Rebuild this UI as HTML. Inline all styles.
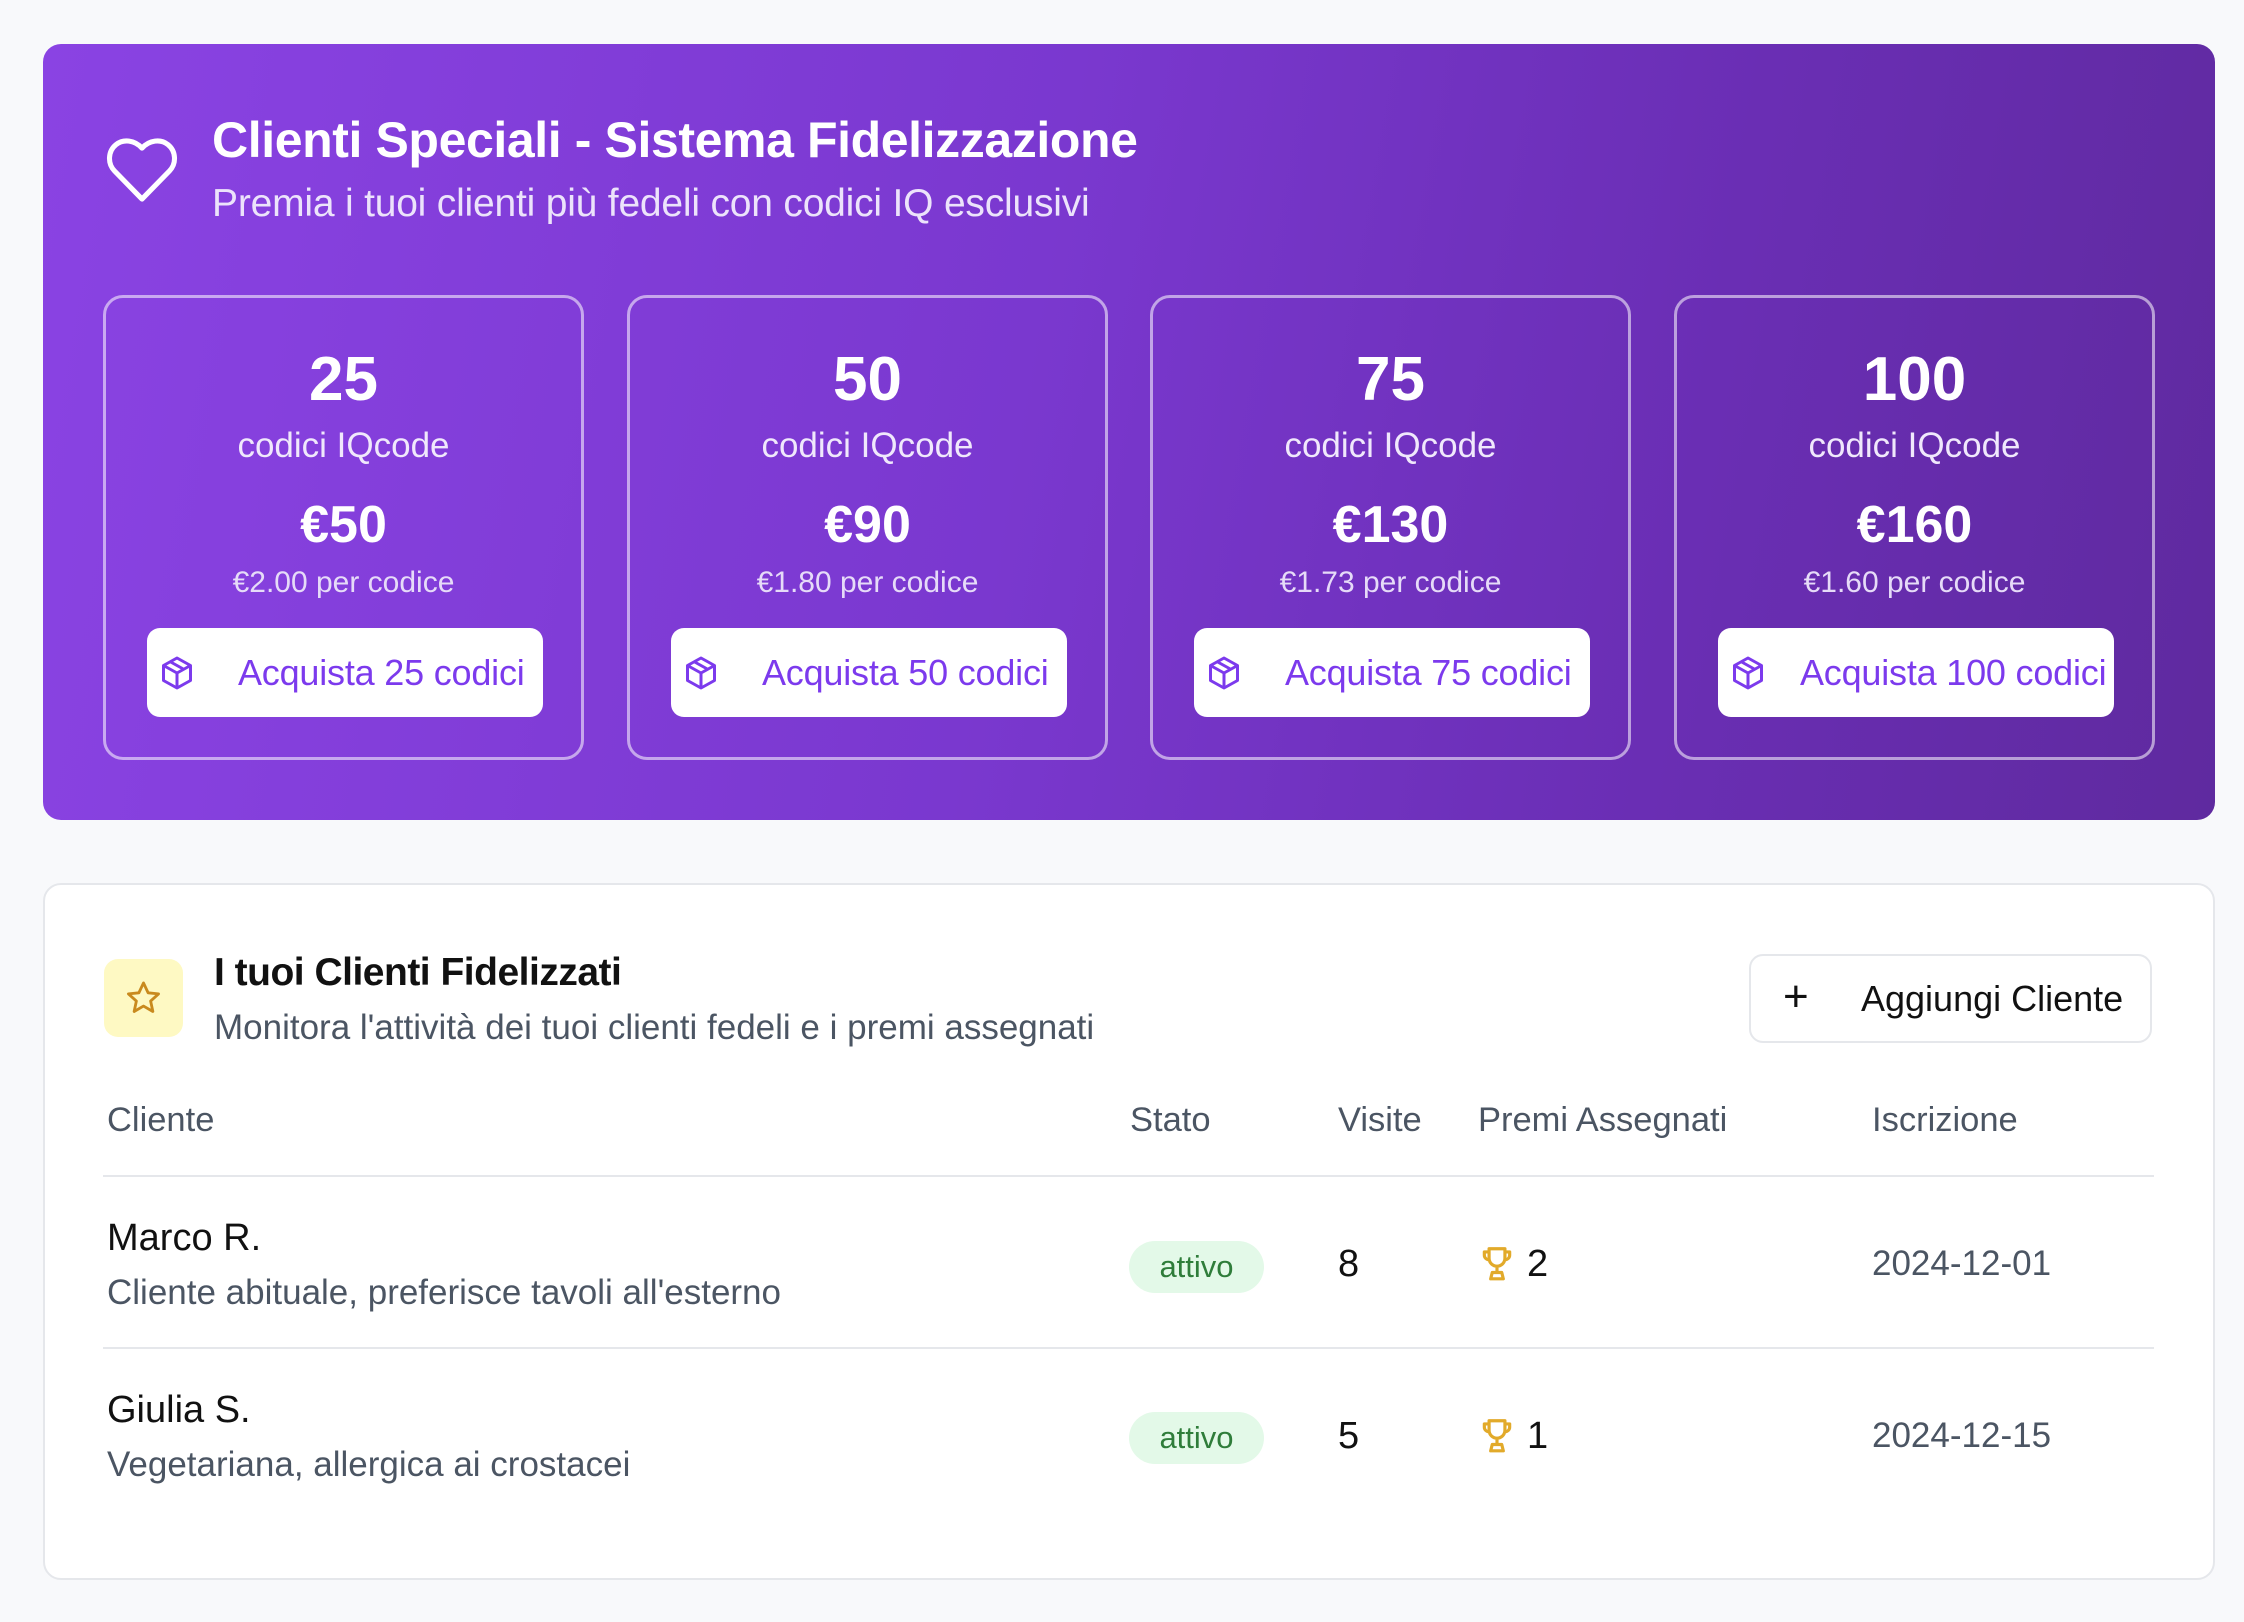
<!DOCTYPE html>
<html><head><meta charset="utf-8"><style>
*{box-sizing:border-box;margin:0;padding:0}
body{width:2244px;height:1622px;background:#f8f9fb;font-family:"Liberation Sans",sans-serif;position:relative;overflow:hidden}
.hero{position:absolute;left:43px;top:44px;width:2172px;height:776px;border-radius:18px;background:linear-gradient(100deg,#8a43e3 0%,#7a38cf 45%,#6a2eb4 75%,#5f2a9f 100%)}
.abs{position:absolute}
.pk{position:absolute;top:251px;width:481px;height:465px;border:3px solid rgba(255,255,255,0.55);border-radius:20px;text-align:center;color:#fff}
.pk .n{position:absolute;top:46px;width:100%;font-size:62px;font-weight:bold}
.pk .c{position:absolute;top:128px;width:100%;font-size:35px;color:#f0e8fc}
.pk .p{position:absolute;top:197px;width:100%;font-size:52px;font-weight:bold}
.pk .pc{position:absolute;top:268px;width:100%;font-size:30px;color:#e6dbf8}
.btn{position:absolute;left:41px;top:330px;width:396px;height:89px;background:#fff;border-radius:13px;color:#7c3aed;font-size:36px;text-align:left}
.btn svg{position:absolute;left:12px;top:26px}
.btn span{position:absolute;left:91px;top:24px;white-space:nowrap;letter-spacing:-0.2px}
.card{position:absolute;left:43px;top:883px;width:2172px;height:697px;background:#fff;border:2px solid #e5e7eb;border-radius:18px}
.t{position:absolute;white-space:nowrap}
.hd{font-size:34.5px;color:#4b5563;top:1101px}
.nm{font-size:38px;color:#111}
.ds{font-size:35px;color:#4b5563}
.badge{position:absolute;width:135px;height:52px;border-radius:26px;background:#e3f9e8;color:#2f7d3a;font-size:31px;text-align:center;line-height:52px}
.line{position:absolute;left:103px;width:2051px;height:2px;background:#e5e7eb}
</style></head><body>
<div class="hero"></div>
<svg class="abs" style="left:104px;top:134px" width="76" height="70" viewBox="0 0 24 22" fill="none" stroke="#fff" stroke-width="1.6" stroke-linejoin="round"><path d="M12 20.5 3.3 11.6C1 9.2 1.3 5.3 3.8 3.3 6.2 1.4 9.7 1.9 12 4.4 14.3 1.9 17.8 1.4 20.2 3.3 22.7 5.3 23 9.2 20.7 11.6Z"/></svg>
<div class="t" style="left:212px;top:111px;font-size:50px;font-weight:bold;color:#fff;letter-spacing:-0.4px">Clienti Speciali - Sistema Fidelizzazione</div>
<div class="t" style="left:212px;top:182px;font-size:39px;color:#ece3fb;letter-spacing:-0.2px">Premia i tuoi clienti più fedeli con codici IQ esclusivi</div>

<div class="pk" style="left:103px;top:295px"><div class="n">25</div><div class="c">codici IQcode</div><div class="p">€50</div><div class="pc">€2.00 per codice</div><div class="btn"><svg width="36" height="38" viewBox="0 0 24 24" fill="none" stroke="#7c3aed" stroke-width="2" stroke-linejoin="round"><path d="M12 2 21 7v10l-9 5-9-5V7z"/><path d="M3 7l9 5 9-5M12 12v10M7.5 4.5l9 5"/></svg><span>Acquista 25 codici</span></div></div>
<div class="pk" style="left:627px;top:295px"><div class="n">50</div><div class="c">codici IQcode</div><div class="p">€90</div><div class="pc">€1.80 per codice</div><div class="btn"><svg width="36" height="38" viewBox="0 0 24 24" fill="none" stroke="#7c3aed" stroke-width="2" stroke-linejoin="round"><path d="M12 2 21 7v10l-9 5-9-5V7z"/><path d="M3 7l9 5 9-5M12 12v10M7.5 4.5l9 5"/></svg><span>Acquista 50 codici</span></div></div>
<div class="pk" style="left:1150px;top:295px"><div class="n">75</div><div class="c">codici IQcode</div><div class="p">€130</div><div class="pc">€1.73 per codice</div><div class="btn"><svg width="36" height="38" viewBox="0 0 24 24" fill="none" stroke="#7c3aed" stroke-width="2" stroke-linejoin="round"><path d="M12 2 21 7v10l-9 5-9-5V7z"/><path d="M3 7l9 5 9-5M12 12v10M7.5 4.5l9 5"/></svg><span>Acquista 75 codici</span></div></div>
<div class="pk" style="left:1674px;top:295px"><div class="n">100</div><div class="c">codici IQcode</div><div class="p">€160</div><div class="pc">€1.60 per codice</div><div class="btn" style="overflow:hidden"><svg width="36" height="38" viewBox="0 0 24 24" fill="none" stroke="#7c3aed" stroke-width="2" stroke-linejoin="round"><path d="M12 2 21 7v10l-9 5-9-5V7z"/><path d="M3 7l9 5 9-5M12 12v10M7.5 4.5l9 5"/></svg><span style="left:82px">Acquista 100 codici</span></div></div>

<div class="card"></div>
<div class="abs" style="left:104px;top:959px;width:79px;height:78px;background:#fef9c3;border-radius:14px"></div>
<svg class="abs" style="left:124px;top:979px" width="39" height="38" viewBox="0 0 24 24" fill="none" stroke="#c98a1e" stroke-width="1.8" stroke-linejoin="round"><path d="M12 2.5l2.9 6.2 6.6.7-5 4.5 1.4 6.6L12 17.1l-5.9 3.4 1.4-6.6-5-4.5 6.6-.7z"/></svg>
<div class="t" style="left:214px;top:951px;font-size:39px;font-weight:bold;color:#111;letter-spacing:-0.5px">I tuoi Clienti Fidelizzati</div>
<div class="t" style="left:214px;top:1008px;font-size:35px;color:#4b5563">Monitora l'attività dei tuoi clienti fedeli e i premi assegnati</div>
<div class="abs" style="left:1749px;top:954px;width:403px;height:89px;border:2px solid #e5e7eb;border-radius:14px;background:#fff"></div>
<div class="t" style="left:1783px;top:972px;font-size:44px;color:#111">+</div>
<div class="t" style="left:1861px;top:978px;font-size:36px;color:#111">Aggiungi Cliente</div>

<div class="t hd" style="left:107px">Cliente</div>
<div class="t hd" style="left:1130px">Stato</div>
<div class="t hd" style="left:1338px">Visite</div>
<div class="t hd" style="left:1478px">Premi Assegnati</div>
<div class="t hd" style="left:1872px">Iscrizione</div>
<div class="line" style="top:1175px"></div>

<div class="t nm" style="left:107px;top:1217px">Marco R.</div>
<div class="t ds" style="left:107px;top:1273px">Cliente abituale, preferisce tavoli all'esterno</div>
<div class="badge" style="left:1129px;top:1241px">attivo</div>
<div class="t nm" style="left:1338px;top:1243px">8</div>
<svg class="abs" style="left:1478px;top:1243px" width="38" height="40" viewBox="0 0 24 24" fill="none" stroke="#e2aa2a" stroke-width="2" stroke-linejoin="round"><path d="M7 3h10v6a5 5 0 0 1-10 0zM7 5H4v2a3 3 0 0 0 3 3M17 5h3v2a3 3 0 0 1-3 3M12 14v4M8 22l1-4h6l1 4z"/></svg>
<div class="t nm" style="left:1527px;top:1243px">2</div>
<div class="t" style="left:1872px;top:1244px;font-size:35px;color:#4b5563">2024-12-01</div>
<div class="line" style="top:1347px"></div>

<div class="t nm" style="left:107px;top:1389px">Giulia S.</div>
<div class="t ds" style="left:107px;top:1445px">Vegetariana, allergica ai crostacei</div>
<div class="badge" style="left:1129px;top:1412px">attivo</div>
<div class="t nm" style="left:1338px;top:1415px">5</div>
<svg class="abs" style="left:1478px;top:1415px" width="38" height="40" viewBox="0 0 24 24" fill="none" stroke="#e2aa2a" stroke-width="2" stroke-linejoin="round"><path d="M7 3h10v6a5 5 0 0 1-10 0zM7 5H4v2a3 3 0 0 0 3 3M17 5h3v2a3 3 0 0 1-3 3M12 14v4M8 22l1-4h6l1 4z"/></svg>
<div class="t nm" style="left:1527px;top:1415px">1</div>
<div class="t" style="left:1872px;top:1416px;font-size:35px;color:#4b5563">2024-12-15</div>
</body></html>
